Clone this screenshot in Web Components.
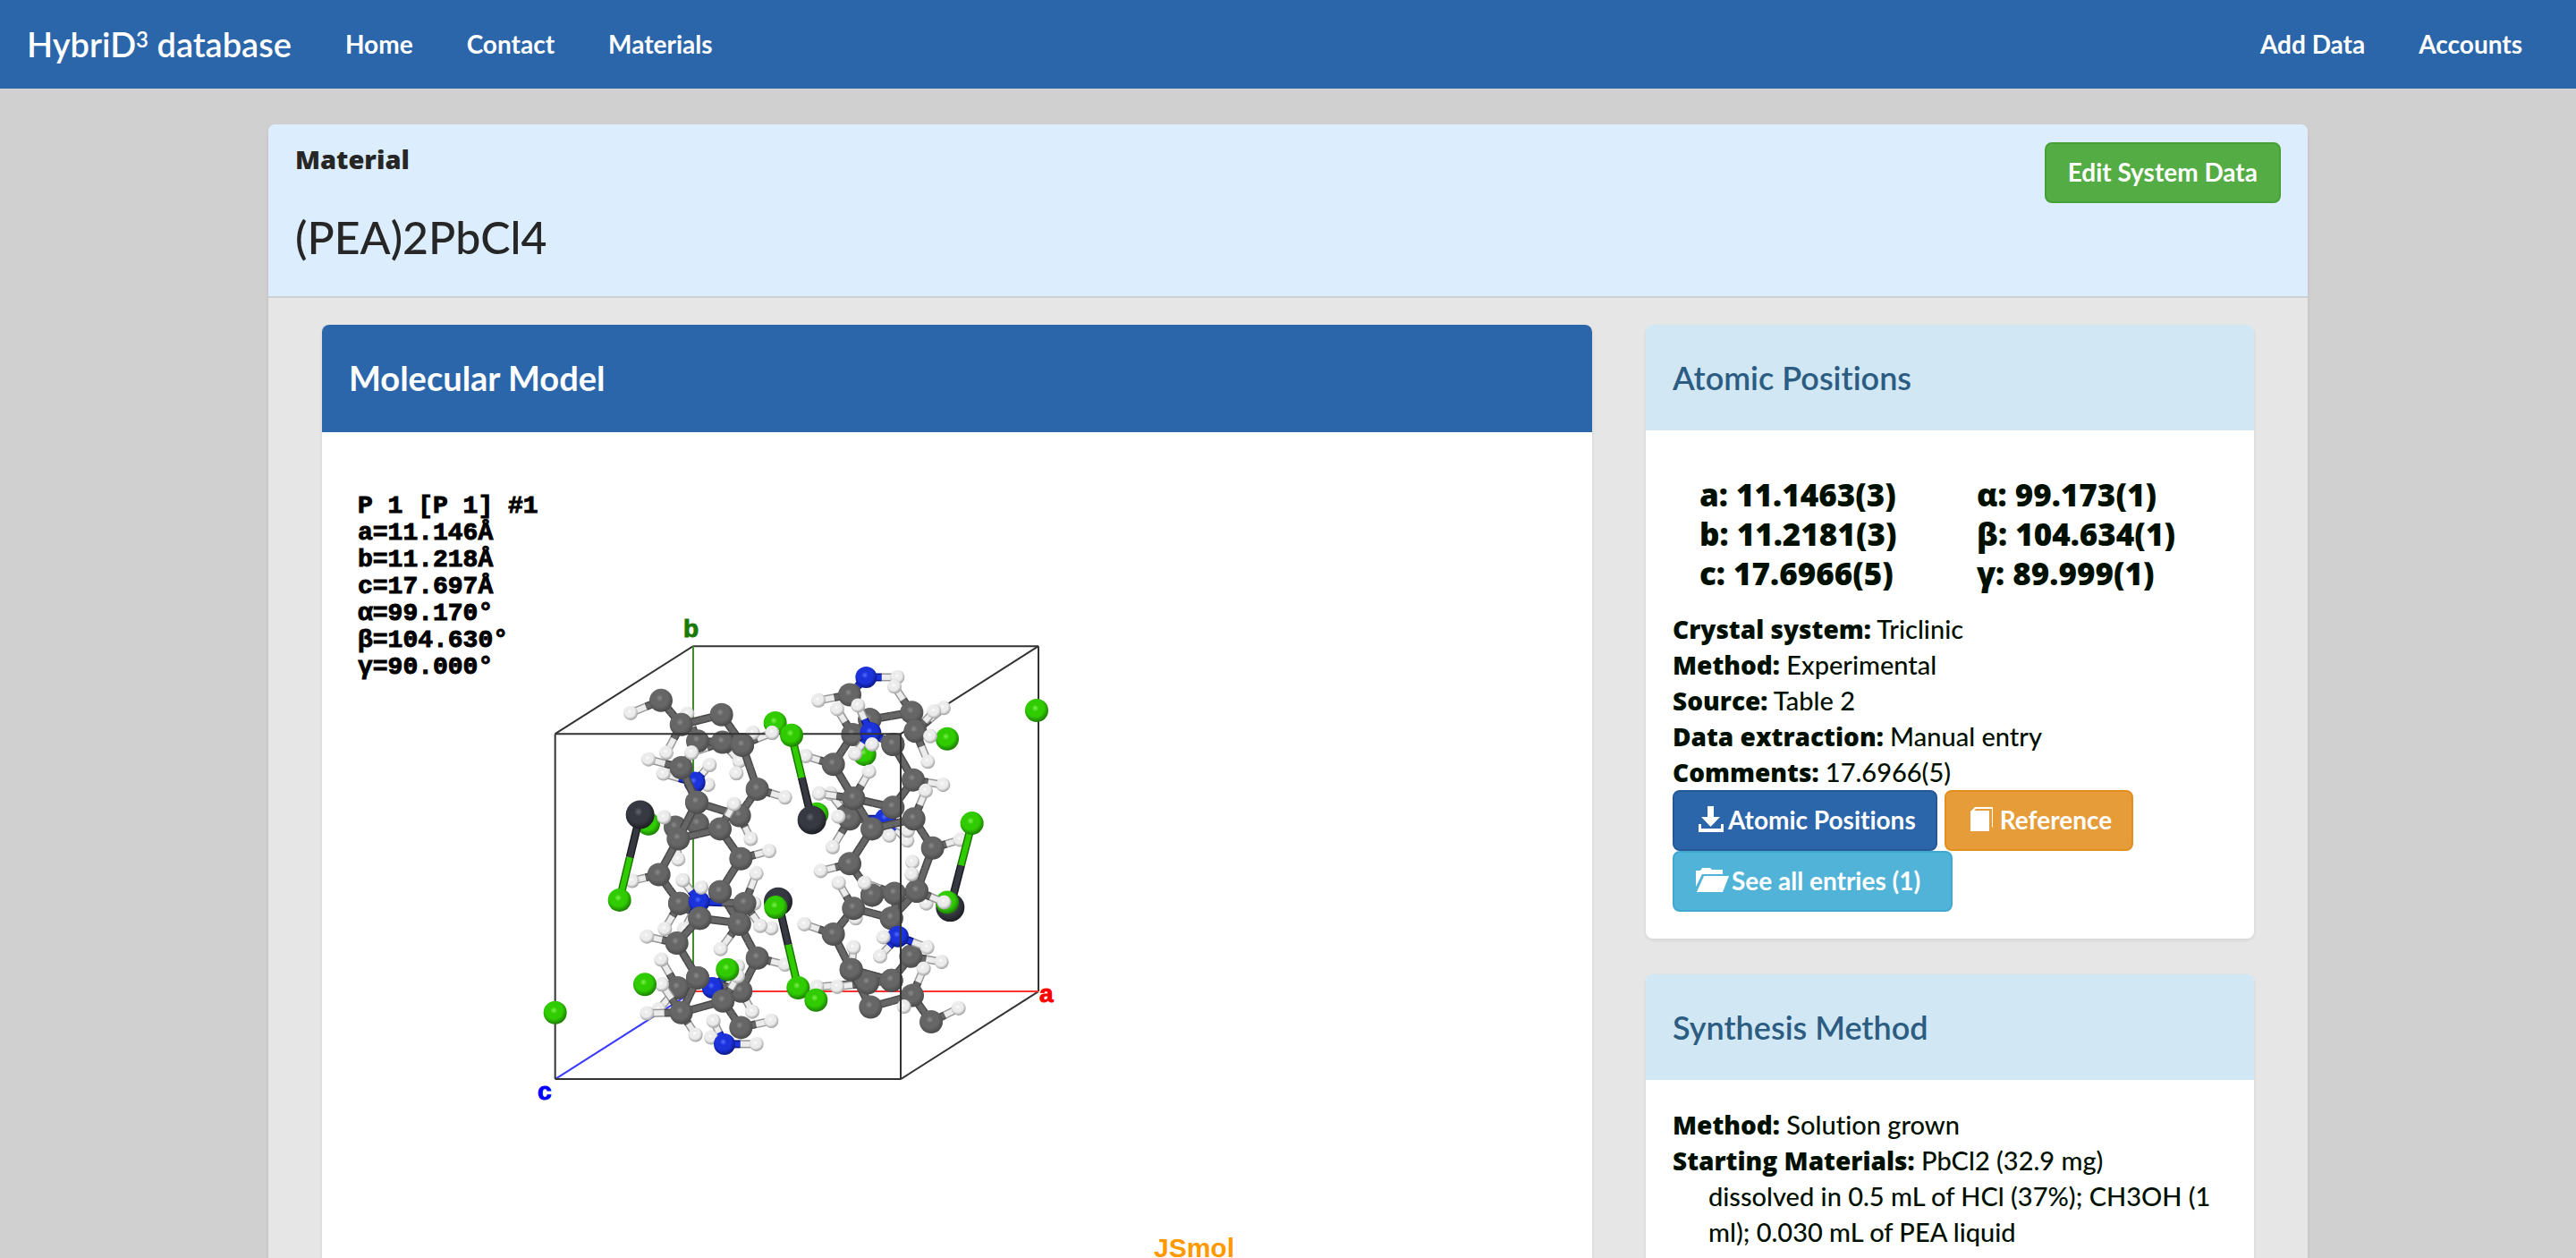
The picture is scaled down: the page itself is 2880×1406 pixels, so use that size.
<!DOCTYPE html>
<html lang="en">
<head>
<meta charset="utf-8">
<title>HybriD3 database</title>
<style>
  body {
    margin: 0;
    height: 100vh;
    overflow: hidden;
    background: #d0d0d0;
    color: #001000;
    font: 29px/40px Lato, "Liberation Sans", sans-serif;
    font-variant-ligatures: none;
    --heavy: "Open Sans", "Liberation Sans", sans-serif;
  }
</style>
</head>
<body>
<site-nav>
  <nav-link>Home</nav-link>
  <nav-link>Contact</nav-link>
  <nav-link>Materials</nav-link>
  <nav-link slot="end">Add Data</nav-link>
  <nav-link slot="end">Accounts</nav-link>
</site-nav>
<material-page name="(PEA)2PbCl4">
  <action-button slot="action" kind="success">Edit System Data</action-button>
  <info-panel kind="primary" heading="Molecular Model">
    <molecule-view></molecule-view>
  </info-panel>
  <info-panel slot="side" heading="Atomic Positions">
    <cell-parameters></cell-parameters>
    <data-entry label="Crystal system">Triclinic</data-entry>
    <data-entry label="Method">Experimental</data-entry>
    <data-entry label="Source">Table 2</data-entry>
    <data-entry label="Data extraction">Manual entry</data-entry>
    <data-entry label="Comments">17.6966(5)</data-entry>
    <button-row>
      <action-button kind="primary" icon="download">Atomic Positions</action-button>
      <action-button kind="warning" icon="book">Reference</action-button>
      <action-button kind="info" icon="folder">See all entries (1)</action-button>
    </button-row>
  </info-panel>
  <info-panel slot="side" heading="Synthesis Method">
    <data-entry label="Method">Solution grown</data-entry>
    <data-entry label="Starting Materials">PbCl2 (32.9 mg)<br>dissolved in 0.5 mL of HCl (37%); CH3OH (1<br>ml); 0.030 mL of PEA liquid</data-entry>
    <data-entry label="Remarks">Place CH3OH on top of PbCl2</data-entry>
  </info-panel>
</material-page>

<script>
const define = (name, render) => customElements.define(name, class extends HTMLElement {
  connectedCallback() {
    if (this.shadowRoot) return;
    this.attachShadow({ mode: "open" }).innerHTML = render(this);
  }
});

define("site-nav", () => `
  <style>
    :host { display: block; background: #2b66aa; }
    nav { display: flex; align-items: center; height: 99px; }
    .brand { padding: 0 30px 2px; color: #fff; text-decoration: none; font-size: 38px; font-weight: 600; }
    sup { font-size: 24px; line-height: 0; vertical-align: 11px; }
    .end { display: flex; margin-left: auto; padding-right: 30px; }
  </style>
  <nav>
    <a class="brand" href="#">HybriD<sup>3</sup> database</a>
    <slot></slot>
    <div class="end"><slot name="end"></slot></div>
  </nav>`);

define("nav-link", () => `
  <style>
    :host { display: block; }
    a { display: block; padding: 0 30px 2px; color: #fff; text-decoration: none; font-size: 28px; line-height: 38px; font-weight: 700; }
  </style>
  <a href="#"><slot></slot></a>`);

define("material-page", el => `
  <style>
    :host { display: block; max-width: 2280px; margin: 40px auto 0; background: #e6e6e6; border-radius: 8px; box-shadow: 0 2px 4px rgba(0,0,0,.08); }
    header { display: flex; justify-content: space-between; align-items: flex-start; padding: 20px 30px 38px; background: #dceefd; border-bottom: 2px solid #cfd1d3; border-radius: 8px 8px 0 0; color: #262626; }
    p { margin: 0; font: 800 29px/38px var(--heavy); }
    h1 { margin: 40px 0 0; font-size: 50px; line-height: 56px; font-weight: 500; }
    .columns { display: flex; padding: 30px; }
    .main, .side { display: flex; flex-direction: column; gap: 40px; flex: 1 1 0; padding: 0 30px; }
    .main { flex-grow: 2; flex-basis: 60px; }
  </style>
  <header>
    <div><p>Material</p><h1>${el.getAttribute("name")}</h1></div>
    <slot name="action"></slot>
  </header>
  <div class="columns">
    <div class="main"><slot></slot></div>
    <div class="side"><slot name="side"></slot></div>
  </div>`);

define("info-panel", el => `
  <style>
    :host { display: block; background: #fff; border-radius: 8px; box-shadow: 0 2px 4px rgba(0,0,0,.08); }
    h2 { margin: 0; padding: 39px 30px; border-radius: 8px 8px 0 0; background: #d1e7f4; color: #2c5c81; font-size: 36px; line-height: 40px; font-weight: 600; }
    :host([kind=primary]) h2 { padding-bottom: 41px; background: #2b66aa; color: #fff; font-size: 38px; font-weight: 700; }
    section { padding: 30px; }
  </style>
  <h2>${el.getAttribute("heading")}</h2>
  <section><slot></slot></section>`);

define("data-entry", el => `
  <style>
    :host { display: block; padding-left: 40px; text-indent: -40px; font-weight: 500; }
    b { font: 800 28px/38px var(--heavy); }
  </style>
  <b>${el.getAttribute("label")}:</b> <slot></slot>`);

define("cell-parameters", () => `
  <style>
    :host { display: grid; grid-template-columns: 1fr 1fr; margin: 20px 0; font: 800 35px/44px var(--heavy); }
    span { padding-left: 30px; }
  </style>
  <span>a: 11.1463(3)</span><span>α: 99.173(1)</span>
  <span>b: 11.2181(3)</span><span>β: 104.634(1)</span>
  <span>c: 17.6966(5)</span><span>γ: 89.999(1)</span>`);

define("button-row", () => `
  <style>:host { display: flex; flex-wrap: wrap; column-gap: 8px; }</style>
  <slot></slot>`);

const icons = {
  download: `<svg width="30" height="30" viewBox="0 0 30 30"><path d="M11 0h7v12h7L14.500 23 4 12h7zM1 20h3v5h22v-5h3v9H1z"/></svg>`,
  book: `<svg width="30" height="30" viewBox="0 0 30 30"><path d="M1 6 6 1h20v22l-1 1V3H7L5 5h17v23H1z"/></svg>`,
  folder: `<svg width="38" height="30" viewBox="0 0 38 30"><path d="M0 22V4h5l2-3h9l2 2h12v5H7z"/><path d="M9 10h28l-7 18H1z"/></svg>`
};
define("action-button", el => {
  const icon = el.getAttribute("icon");
  return `
  <style>
    :host { display: block; }
    button { display: flex; align-items: center; gap: 4px; height: 68px; padding: 0 24px 2px; border: 2px solid var(--edge); border-radius: 8px; background: var(--fill); color: #fff; font: inherit; font-size: 28px; font-weight: 700; }
    button.download, button.book { padding: 0 22px 2px 26px; }
    button.folder { gap: 2px; padding-right: 34px; }
    svg { fill: #fff; }
    :host([kind=success]) { --fill: #54ac45; --edge: #45a135; }
    :host([kind=primary]) { --fill: #2b66aa; --edge: #265895; }
    :host([kind=warning]) { --fill: #e69c38; --edge: #e38f20; }
    :host([kind=info]) { --fill: #52b3d8; --edge: #3fa9d2; }
  </style>
  <button type="button" class="${icon || ""}">${icons[icon] || ""}<span><slot></slot></span></button>`;
});

/* Ball-and-stick fragments, listed back to front. Atoms are "element x y";
   bonds are pairs of atom indexes within the fragment. */
const fragments = [
  ["Cl 435 705|Cl 1000 675|Cl 860 400|Cl 1160 495|Cl 1437 448|Cl 1737 362", ""],
  // left column
  ["H 565 372|C 600 455|C 750 465|H 785 430|C 683 458|H 580 490|H 740 515|H 850 430|H 730 552", "1-2 2-3 4-5 4-6 2-7 1-4 0-1"],
  ["C 477 332|H 375 370|C 545 405|H 495 490|C 680 375|C 750 465", "0-1 0-2 2-3 2-4 4-5"],
  ["H 485 553|H 635 587|H 640 527|N 590 580", "3-0 3-1 3-2"],
  ["C 525 715|C 600 705|H 487 685|H 535 812|C 740 680|H 778 750|C 800 600|H 893 625|C 750 468|C 597 640|C 545 535|H 435 510|H 580 490", "0-1 0-2 0-3 4-5 4-6 6-7 6-8 4-9 9-10 10-11 10-12"],
  ["C 675 910|C 745 810|H 840 787|C 675 720|H 722 645|C 535 750|C 597 640|C 470 858|H 380 877|C 540 945|H 490 1022", "0-1 1-2 1-3 3-4 3-5 5-6 5-7 7-8 7-9 9-10"],
  ["H 790 945|H 847 1020|H 810 1013|C 540 945|C 607 990|C 740 1005|C 675 910|H 677 1083|C 758 945|H 797 855|N 605 940|H 550 875|H 612 897|H 555 1022", "3-4 4-5 5-6 5-7 8-0 8-2 8-5 8-9 8-10 10-11 10-12 10-13"],
  ["N 650 1200|H 735 1135|C 533 1200|H 478 1115|H 480 1190|H 470 1265|H 783 1272|C 745 1210|C 800 1110|H 893 1130|C 740 1008|C 607 990|C 530 1065|H 430 1045|C 600 1170", "0-14 0-1 0-7 2-3 2-4 2-5 7-6 7-8 8-9 8-10 11-12 12-13 12-14 7-14"],
  ["C 600 1170|C 545 1275|H 430 1277|H 480 1190|H 593 1342|C 685 1240|H 735 1165|C 745 1320|H 847 1300", "0-1 1-2 1-3 1-4 1-5 5-6 5-7 7-8"],
  ["H 645 1350|H 653 1300|H 797 1370|N 690 1370", "3-0 3-1 3-2"],
  ["Cl 700 1145|Cl 423 1190", ""],
  ["Pb 407 677|Cl 338 935", "0-1"],
  // right column
  ["C 1110 315|H 1005 332|N 1165 262|H 1270 262", "0-1 0-2 2-3"],
  ["C 1177 390|C 1318 368|H 1260 290|C 1330 425|H 1380 440|H 1425 355|H 1393 365|H 1372 517", "0-1 1-2 1-3 3-4 3-5 3-6 3-7"],
  ["H 1045 613|C 1110 690|H 1072 683|H 1053 775|N 1230 690|H 1243 740|H 1303 755|H 1305 725", "1-0 1-2 1-3 1-4 4-5 4-6 4-7"],
  ["C 1177 390|C 1120 435|H 1068 358|C 1055 525|H 962 500|C 1123 628|H 1175 547|H 1007 613|C 1255 655|C 1323 572|H 1423 587|C 1255 465", "0-1 1-2 1-3 3-4 3-5 5-6 5-7 5-8 8-9 9-10 9-11"],
  ["C 1255 465|H 1138 347|N 1180 430|H 1185 465|H 1128 493", "2-0 2-1 2-3 2-4"],
  ["C 1123 628|C 1185 720|C 1325 690|H 1365 605|C 1388 778|H 1480 753|C 1110 825|H 1013 847|C 1185 920|C 1335 908", "0-1 1-2 2-3 2-4 4-5 1-6 6-7 6-8 4-9"],
  ["H 1367 945|H 1130 990|C 1250 990|C 1123 960|H 1073 883|C 1055 1038|H 958 1008|C 1115 1145|H 1123 1078|C 1250 1178|C 1315 1105|H 1418 1122", "2-3 3-4 3-5 5-6 5-7 7-8 7-9 9-10 10-11"],
  ["Pb 1447 957|Cl 1520 703|Cl 1437 942", "0-1"],
  ["C 1185 920|C 1250 990|C 1335 908|H 1320 820|H 1318 857|H 1427 942|C 1260 915|H 1160 883|N 1272 1045|H 1223 1047|H 1212 1105|H 1370 1078", "0-6 1-2 2-4 2-5 2-6 6-7 6-8 8-9 8-10 8-11"],
  ["H 1000 1197|C 1170 1185|H 1068 1197|C 1115 1145|C 1250 1178|C 1180 1258|C 1320 1223|H 1292 1257|H 1358 1142|C 1383 1303|H 1475 1262", "1-0 1-2 1-3 3-4 1-4 3-5 5-6 6-7 6-8 6-9 9-10"]
];
/* Drawn after the front edges of the cell. */
const frontFragments = [
  ["Pb 870 940|Cl 937 1200|Cl 862 957|Cl 997 1237", "0-1"],
  ["Pb 983 693|Cl 915 437", "0-1"],
  ["Cl 122 1275|H 850 430", ""]
];
const radius = { C: 13, H: 8, N: 12, Cl: 13, Pb: 16 };
const tone = {
  C: ["#8c8c8c", "#666666", "#484848"], H: ["#ffffff", "#ececec", "#989898"], N: ["#5070ff", "#1c33dc", "#0c1680"],
  Cl: ["#7cf050", "#30cc00", "#1a7600"], Pb: ["#63666f", "#373942", "#1b1c21"]
};
const px = x => 190 + x / 3, py = y => 147 + y * 0.37;
const line = (x1, y1, x2, y2, c, w) => `<line x1="${x1}" y1="${y1}" x2="${x2}" y2="${y2}" stroke="${c}" stroke-width="${w}"/>`;
const edge = (x1, y1, x2, y2, c = "#333") => line(px(x1), py(y1), px(x2), py(y2), c, 2);
const drawFragment = ([atomText, bondText]) => {
  const atoms = atomText.split("|").map(t => { const [e, x, y] = t.split(" "); return { e, x: px(+x), y: py(+y) }; });
  let out = "";
  for (const pair of bondText.split(" ").filter(Boolean)) {
    const [a, b] = pair.split("-").map(i => atoms[i]);
    const mx = (a.x + b.x) / 2, my = (a.y + b.y) / 2;
    for (const p of [a, b]) {
      out += line(p.x, p.y, mx, my, tone[p.e][2], 9);
      out += line(p.x, p.y, mx, my, tone[p.e][1], 6);
    }
  }
  for (const a of atoms) out += `<circle cx="${a.x}" cy="${a.y}" r="${radius[a.e]}" fill="url(#${a.e})"/>`;
  return out;
};

define("molecule-view", () => `
  <style>
    :host { display: block; }
    svg { display: block; width: 1000px; max-width: 100%; }
    .legend { font: 700 28px "Liberation Mono", monospace; fill: #000; stroke: #000; white-space: pre; }
    .axis { font: 700 28px "Liberation Sans", sans-serif; stroke-width: 1; }
    .mark { font: 700 30px "Liberation Sans", sans-serif; fill: #ff9900; }
  </style>
  <svg viewBox="0 0 1000 900" role="img" aria-label="Unit cell of (PEA)2PbCl4">
    <defs>${Object.entries(tone).map(([e, [hi, mid, lo]]) => `
      <radialGradient id="${e}" cx="44%" cy="40%" r="62%">
        <stop offset="0" stop-color="${hi}"/><stop offset=".25" stop-color="${mid}"/><stop offset=".6" stop-color="${mid}"/><stop offset="1" stop-color="${lo}"/>
      </radialGradient>`).join("")}
    </defs>
    ${edge(122, 433, 585, 168)}${edge(585, 168, 1743, 168)}${edge(1743, 168, 1743, 1211)}
    ${edge(1743, 168, 1281, 433)}${edge(1743, 1211, 1281, 1476)}
    ${edge(585, 168, 585, 1211, "#3d8f28")}${edge(585, 1211, 1743, 1211, "#ff3030")}${edge(585, 1211, 122, 1476, "#3a3aff")}
    ${fragments.map(drawFragment).join("")}
    ${edge(122, 433, 1281, 433)}${edge(1281, 433, 1281, 1476)}${edge(1281, 1476, 122, 1476)}${edge(122, 1476, 122, 433)}
    ${frontFragments.map(drawFragment).join("")}
    <text class="axis" x="374" y="199" fill="#1a7a00" stroke="#1a7a00">b</text>
    <text class="axis" x="772" y="607" fill="#ff0000" stroke="#ff0000">a</text>
    <text class="axis" x="211" y="716" fill="#0000ff" stroke="#0000ff">c</text>
    <g class="legend">
      ${["P 1 [P 1] #1", "a=11.146Å", "b=11.218Å", "c=17.697Å", "α=99.170°", "β=104.630°", "γ=90.000°"]
        .map((t, i) => `<text x="10" y="${60 + i * 30}">${t}</text>`).join("")}
    </g>
    <text class="mark" x="900" y="892">JSmol</text>
  </svg>`);
</script>
</body>
</html>
